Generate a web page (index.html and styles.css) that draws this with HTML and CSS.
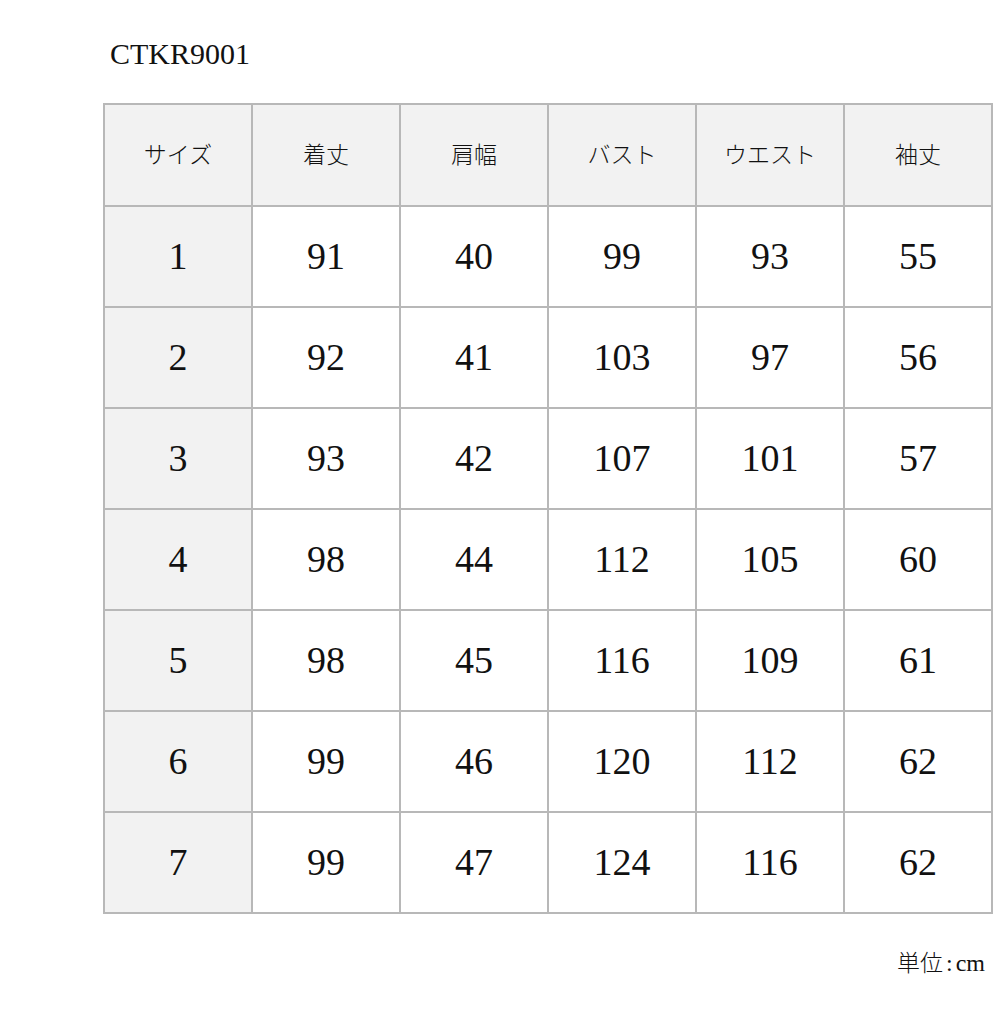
FILE: index.html
```html
<!DOCTYPE html>
<html lang="ja">
<head>
<meta charset="utf-8">
<link rel="stylesheet" href="styles.css">
</head>
<body>
<div class="page">
  <div class="title">CTKR9001</div>
  <div class="grid">
    <div class="cell head">サイズ</div>
    <div class="cell head">着丈</div>
    <div class="cell head">肩幅</div>
    <div class="cell head">バスト</div>
    <div class="cell head">ウエスト</div>
    <div class="cell head">袖丈</div>

    <div class="cell size">1</div><div class="cell">91</div><div class="cell">40</div><div class="cell">99</div><div class="cell">93</div><div class="cell">55</div>
    <div class="cell size">2</div><div class="cell">92</div><div class="cell">41</div><div class="cell">103</div><div class="cell">97</div><div class="cell">56</div>
    <div class="cell size">3</div><div class="cell">93</div><div class="cell">42</div><div class="cell">107</div><div class="cell">101</div><div class="cell">57</div>
    <div class="cell size">4</div><div class="cell">98</div><div class="cell">44</div><div class="cell">112</div><div class="cell">105</div><div class="cell">60</div>
    <div class="cell size">5</div><div class="cell">98</div><div class="cell">45</div><div class="cell">116</div><div class="cell">109</div><div class="cell">61</div>
    <div class="cell size">6</div><div class="cell">99</div><div class="cell">46</div><div class="cell">120</div><div class="cell">112</div><div class="cell">62</div>
    <div class="cell size">7</div><div class="cell">99</div><div class="cell">47</div><div class="cell">124</div><div class="cell">116</div><div class="cell">62</div>
  </div>
  <div class="unit"><span class="unit-jp">単位</span><span class="unit-sep">:</span>cm</div>
</div>
</body>
</html>
```
FILE: styles.css
```css
html, body {
  margin: 0;
  padding: 0;
  background: #ffffff;
}
.page {
  padding: 36px 0 0 103px;
  width: 890px;
  font-family: "Liberation Serif", "Noto Sans CJK JP", serif;
  color: #111;
}
.title {
  font-size: 30px;
  line-height: 36px;
  padding-left: 7px;
  height: 36px;
  margin-bottom: 31px;
}
.grid {
  display: grid;
  grid-template-columns: repeat(6, 146px);
  grid-template-rows: 100px repeat(7, 99px);
  gap: 2px;
  padding: 2px;
  background: #b8b8b8;
  width: 886px;
}
.cell {
  background: #ffffff;
  display: flex;
  align-items: center;
  justify-content: center;
  font-size: 38px;
  padding-bottom: 2px;
  box-sizing: border-box;
}
.head {
  background: #f2f2f2;
  font-family: "Noto Sans CJK JP", sans-serif;
  font-weight: 300;
  font-size: 23px;
  padding-bottom: 4px;
}
.size {
  background: #f2f2f2;
}
.unit {
  margin-top: 32px;
  text-align: right;
  padding-right: 8px;
  font-size: 24px;
  line-height: 30px;
  font-family: "Liberation Serif", serif;
}
.unit-jp {
  font-family: "Noto Sans CJK JP", sans-serif;
  font-weight: 300;
  font-size: 23px;
}
.unit-sep {
  padding: 0 3px;
}
```
